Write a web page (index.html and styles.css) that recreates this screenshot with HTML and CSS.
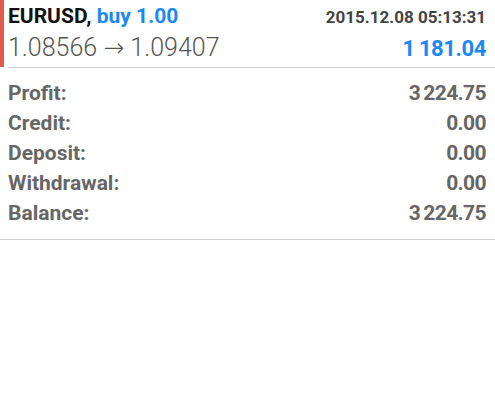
FILE: index.html
```html
<!DOCTYPE html>
<html lang="en">
<head>
    <meta charset="UTF-8">
    <title>Deal</title>
    <link rel="stylesheet" href="styles.css">
</head>
<body>

    <div class="deal">
        <div class="deal-row">
            <span class="deal-title">EURUSD, <span class="deal-type">buy 1.00</span></span>
            <span class="deal-time">2015.12.08 05:13:31</span>
        </div>
        <div class="deal-row">
            <span class="deal-prices">1.08566 <span class="arrow">→</span> 1.09407</span>
            <span class="deal-profit">1 181.04</span>
        </div>
    </div>
    <div class="divider indent"></div>

    <div class="summary">
        <div class="summary-row"><span>Profit:</span><span class="value">3 224.75</span></div>
        <div class="summary-row"><span>Credit:</span><span class="value">0.00</span></div>
        <div class="summary-row"><span>Deposit:</span><span class="value">0.00</span></div>
        <div class="summary-row"><span>Withdrawal:</span><span class="value">0.00</span></div>
        <div class="summary-row"><span>Balance:</span><span class="value">3 224.75</span></div>
    </div>
    <div class="divider"></div>

</body>
</html>
```

FILE: styles.css
```css
body {
    margin: 0;
    background: white;
    font-family: Roboto, 'Liberation Sans', sans-serif;
}

.deal {
    border-left: 4px solid #e05a4e;
    padding: 1px 9px 0 4px;
    height: 67px;
    box-sizing: border-box;
}

.deal-row {
    display: flex;
    justify-content: space-between;
    align-items: baseline;
}

.deal-title {
    font-size: 21px;
    font-weight: bold;
    line-height: 30px;
    color: #111;
}

.deal-type {
    color: #1a88f5;
}

.deal-time {
    font-size: 17px;
    font-weight: bold;
    color: #444;
}

.deal-prices {
    font-weight: 300;
    font-size: 25px;
    line-height: 33px;
    color: #555;
}

.arrow {
    font-family: 'DejaVu Sans', sans-serif;
    font-weight: 200;
    font-size: 25px;
}

.deal-profit {
    font-size: 22px;
    font-weight: bold;
    letter-spacing: -0.4px;
    word-spacing: -1px;
    color: #1a88f5;
}

.divider {
    height: 1px;
    background: #cfcfcf;
}

.divider.indent {
    margin-left: 8px;
}

.summary {
    padding: 10px 9px 11px 8px;
}

.summary-row {
    display: flex;
    justify-content: space-between;
    font-size: 21px;
    font-weight: bold;
    line-height: 30px;
    color: #666;
}

.value {
    letter-spacing: -0.6px;
    word-spacing: -1.5px;
}
```
